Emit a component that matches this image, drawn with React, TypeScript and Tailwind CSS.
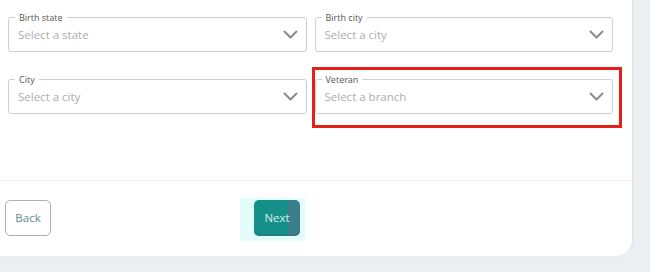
const fields = [
  { label: 'Birth state', placeholder: 'Select a state' },
  { label: 'Birth city', placeholder: 'Select a city' },
  { label: 'City', placeholder: 'Select a city' },
  { label: 'Veteran', placeholder: 'Select a branch', marked: true },
]

function Chevron() {
  return (
    <svg width="15" height="9" viewBox="0 0 15 9" fill="none" className="shrink-0">
      <path d="M1.5 1.5L7.5 7.5L13.5 1.5" stroke="#8b8b8b" strokeWidth="2" strokeLinecap="round" strokeLinejoin="round" />
    </svg>
  )
}

function SelectField({ label, placeholder, marked }: { label: string; placeholder: string; marked?: boolean }) {
  return (
    <div className="relative">
      <div className="flex h-[35px] items-center justify-between rounded-[3px] border border-[#cfcfcf] bg-white pl-[9px] pr-[8px]">
        <span className="mt-[1px] text-[11.5px] text-[#adadad]">{placeholder}</span>
        <Chevron />
      </div>
      <span className="absolute left-[7px] top-[-5px] bg-white px-[4px] text-[9px] leading-[11px] text-[#555]">{label}</span>
      {marked && (
        <div className="pointer-events-none absolute -left-[3px] -right-[9px] -top-[12px] -bottom-[14px] border-[3px] border-[#e5201b]" />
      )}
    </div>
  )
}

export default function App() {
  return (
    <div className="h-[272px] w-[650px] bg-[#ebeff2] font-['Open_Sans',sans-serif]">
      <div className="flex h-[256px] w-[632px] flex-col rounded-br-[16px] bg-white shadow-[1px_0_2px_rgba(0,0,0,0.06)]">
        <div className="grid h-[180px] grid-cols-2 gap-x-[8px] gap-y-[27px] content-start pl-[8px] pr-[19px] pt-[17px]">
          {fields.map((f) => (
            <SelectField key={f.label} {...f} />
          ))}
        </div>
        <div className="flex items-start border-t border-[#f1f2f3] pt-[19px]">
          <button className="ml-[5px] h-[36px] w-[46px] rounded-[5px] border border-[#a9b2b7] text-[11.5px] text-[#5e8b94]">
            Back
          </button>
          <div className="ml-[189px] -mt-[2px] bg-[#e3fdfb] pl-[14px] pr-[5px] pt-[2px] pb-[5px]">
            <button className="h-[36px] w-[46px] rounded-[5px] bg-[linear-gradient(to_right,#149089_75%,#3a7f8b_75%)] text-[11.5px] text-[#d2f1eb] shadow-[inset_0_-2px_0_rgba(70,90,130,0.35)]">
              Next
            </button>
          </div>
        </div>
      </div>
    </div>
  )
}
